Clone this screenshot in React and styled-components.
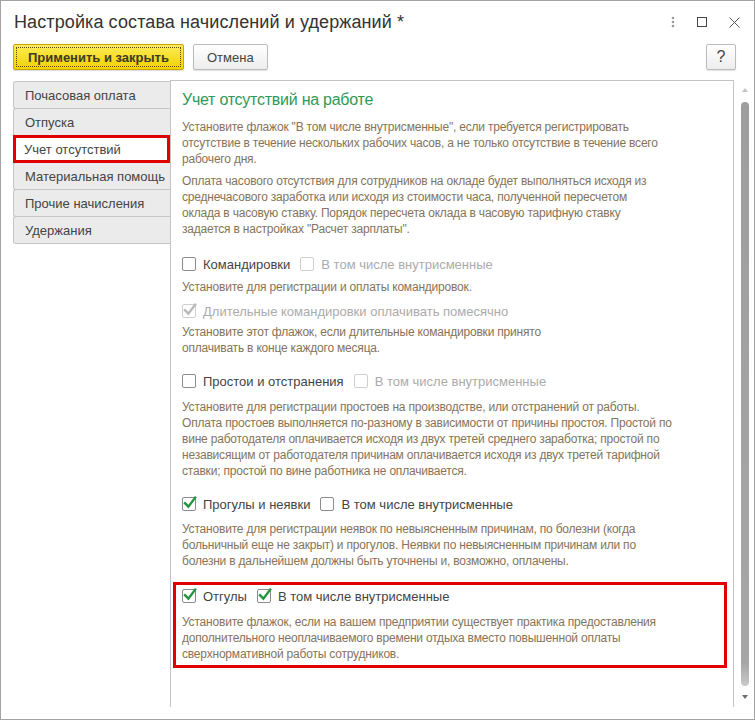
import React from 'react'
import styled, { createGlobalStyle } from 'styled-components'

const Global = createGlobalStyle`
  html, body { margin: 0; padding: 0; background: #fff; }
  body { font-family: "Liberation Sans", Arial, sans-serif; }
`

const tabs = [
  'Почасовая оплата',
  'Отпуска',
  'Учет отсутствий',
  'Материальная помощь',
  'Прочие начисления',
  'Удержания',
]

const Check = ({ checked, disabled }) => (
  <Box $disabled={disabled}>
    {checked && (
      <svg width="16" height="16" viewBox="0 0 16 16">
        <path
          d="M3 8.2 L6.4 11.6 L13.2 2.6"
          fill="none"
          stroke={disabled ? '#b9b9b9' : '#23963f'}
          strokeWidth="2.4"
          strokeLinecap="square"
        />
      </svg>
    )}
  </Box>
)

const Option = ({ label, checked, disabled }) => (
  <OptionWrap>
    <Check checked={checked} disabled={disabled} />
    <OptionText $disabled={disabled}>{label}</OptionText>
  </OptionWrap>
)

// пояснения выводятся построчно, как в форме
const Hint = ({ top, lines }) => (
  <HintText $top={top}>
    {lines.map(l => (
      <HintLine key={l}>{l}</HintLine>
    ))}
  </HintText>
)

const App = () => {
  return (
    <>
      <Global />
      <Window>
        <TitleBar>
          <Title>Настройка состава начислений и удержаний *</Title>
          <TitleIcons>
            <svg width="4" height="12" viewBox="0 0 4 12">
              <circle cx="2" cy="2" r="1.3" fill="#9a9a9a" />
              <circle cx="2" cy="6" r="1.3" fill="#9a9a9a" />
              <circle cx="2" cy="10" r="1.3" fill="#9a9a9a" />
            </svg>
            <svg width="10" height="10" viewBox="0 0 10 10">
              <rect x="0.5" y="0.5" width="9" height="9" fill="none" stroke="#444" />
            </svg>
            <svg width="11" height="11" viewBox="0 0 11 11">
              <path d="M0.5 0.5 L10.5 10.5 M10.5 0.5 L0.5 10.5" stroke="#555" strokeWidth="1" />
            </svg>
          </TitleIcons>
        </TitleBar>

        <Toolbar>
          <PrimaryButton>
            <span>Применить и закрыть</span>
          </PrimaryButton>
          <Button>Отмена</Button>
          <Spacer />
          <Button $narrow>?</Button>
        </Toolbar>

        <Body>
          <TabList>
            {tabs.map((t, i) => (
              <Tab key={t} $active={i === 2}>{t}</Tab>
            ))}
          </TabList>

          <Panel>
            <Heading>Учет отсутствий на работе</Heading>
            <Hint
              top={9}
              lines={[
                'Установите флажок "В том числе внутрисменные", если требуется регистрировать',
                'отсутствие в течение нескольких рабочих часов, а не только отсутствие в течение всего',
                'рабочего дня.',
              ]}
            />
            <Hint
              top={6}
              lines={[
                'Оплата часового отсутствия для сотрудников на окладе будет выполняться исходя из',
                'среднечасового заработка или исходя из стоимости часа, полученной пересчетом',
                'оклада в часовую ставку. Порядок пересчета оклада в часовую тарифную ставку',
                'задается в настройках "Расчет зарплаты".',
              ]}
            />

            <Row $top={16}>
              <Option label="Командировки" />
              <Option label="В том числе внутрисменные" disabled />
            </Row>
            <Hint top={4} lines={['Установите для регистрации и оплаты командировок.']} />
            <Row $top={5}>
              <Option label="Длительные командировки оплачивать помесячно" checked disabled />
            </Row>
            <Hint
              top={2}
              lines={[
                'Установите этот флажок, если длительные командировки принято',
                'оплачивать в конце каждого месяца.',
              ]}
            />

            <Row $top={14}>
              <Option label="Простои и отстранения" />
              <Option label="В том числе внутрисменные" disabled />
            </Row>
            <Hint
              top={7}
              lines={[
                'Установите для регистрации простоев на производстве, или отстранений от работы.',
                'Оплата простоев выполняется по-разному в зависимости от причины простоя. Простой по',
                'вине работодателя оплачивается исходя из двух третей среднего заработка; простой по',
                'независящим от работодателя причинам оплачивается исходя из двух третей тарифной',
                'ставки; простой по вине работника не оплачивается.',
              ]}
            />

            <Row $top={14}>
              <Option label="Прогулы и неявки" checked />
              <Option label="В том числе внутрисменные" />
            </Row>
            <Hint
              top={6}
              lines={[
                'Установите для регистрации неявок по невыясненным причинам, по болезни (когда',
                'больничный еще не закрыт) и прогулов. Неявки по невыясненным причинам или по',
                'болезни в дальнейшем должны быть уточнены и, возможно, оплачены.',
              ]}
            />

            <Highlight>
              <Row>
                <Option label="Отгулы" checked />
                <Option label="В том числе внутрисменные" checked />
              </Row>
              <Hint
                top={7}
                lines={[
                  'Установите флажок, если на вашем предприятии существует практика предоставления',
                  'дополнительного неоплачиваемого времени отдыха вместо повышенной оплаты',
                  'сверхнормативной работы сотрудников.',
                ]}
              />
            </Highlight>
          </Panel>

          <Scrollbar>
            <Arrow $dir="up" />
            <Thumb />
            <Arrow $dir="down" />
          </Scrollbar>
        </Body>
      </Window>
    </>
  )
}

export default App

const Window = styled.div`
  width: 755px;
  height: 720px;
  box-sizing: border-box;
  border: 1px solid #a3a3a3;
  display: flex;
  flex-direction: column;
  background: #fff;
  overflow: hidden;
`

const TitleBar = styled.div`
  height: 42px;
  display: flex;
  align-items: center;
  padding: 0 14px 0 13px;
`

const Title = styled.div`
  flex: 1;
  font-size: 18px;
  letter-spacing: 0.1px;
  color: #333;
  white-space: nowrap;
`

const TitleIcons = styled.div`
  display: flex;
  align-items: center;
  gap: 22px;
  svg { display: block; }
`

const Toolbar = styled.div`
  display: flex;
  align-items: center;
  gap: 9px;
  padding: 1px 18px 0 12px;
  height: 26px;
`

const Spacer = styled.div`
  flex: 1;
`

const Button = styled.div`
  box-sizing: border-box;
  height: 26px;
  padding: 0 ${p => (p.$narrow ? '0' : '13px')};
  width: ${p => (p.$narrow ? '30px' : 'auto')};
  display: flex;
  align-items: center;
  justify-content: center;
  border: 1px solid #bcbcbc;
  border-radius: 2px;
  background: linear-gradient(#ffffff, #ededed);
  box-shadow: 0 1px 1px rgba(0, 0, 0, 0.12);
  font-size: ${p => (p.$narrow ? '16px' : '13px')};
  color: #444;
`

const PrimaryButton = styled.div`
  box-sizing: border-box;
  height: 26px;
  padding: 2px;
  display: flex;
  border: 1px solid #c9a600;
  border-radius: 2px;
  background: linear-gradient(#fcec57, #f2d200);
  box-shadow: 0 1px 1px rgba(0, 0, 0, 0.15);

  span {
    flex: 1;
    display: flex;
    align-items: center;
    padding: 0 11px;
    border: 1px dotted #5a4a00;
    font-size: 13px;
    font-weight: bold;
    color: #3d3a26;
    white-space: nowrap;
  }
`

const Body = styled.div`
  flex: 1;
  display: flex;
  margin-top: 10px;
  padding-left: 12px;
  min-height: 0;
`

const TabList = styled.div`
  width: 157px;
  padding-top: 1px;
  display: flex;
  flex-direction: column;
`

const Tab = styled.div`
  position: relative;
  z-index: ${p => (p.$active ? 1 : 0)};
  box-sizing: border-box;
  flex: none;
  height: 28px;
  margin-top: -1px;
  &:first-child { margin-top: 0; }
  display: flex;
  align-items: center;
  padding-left: ${p => (p.$active ? '8px' : '11px')};
  font-size: 13px;
  color: #444;
  white-space: nowrap;
  overflow: hidden;
  background: ${p => (p.$active ? '#fff' : '#ebebeb')};
  border: ${p => (p.$active ? '3px solid #e00000' : '1px solid #c6c6c6')};
  border-right: ${p => (p.$active ? '3px solid #e00000' : 'none')};
  border-radius: ${p => (p.$active ? '0' : '3px 0 0 3px')};
`

const Panel = styled.div`
  width: 564px;
  box-sizing: border-box;
  border: 1px solid #c3c3c3;
  border-bottom: none;
  padding: 9px 12px 0 11px;
  margin-bottom: 12px;
`

const Heading = styled.div`
  font-size: 16px;
  letter-spacing: -0.25px;
  line-height: 20px;
  color: #2f9a58;
`

const HintText = styled.div`
  margin-top: ${p => p.$top || 0}px;
  font-size: 12px;
  letter-spacing: -0.2px;
  line-height: 16px;
  color: #857459;
`

const HintLine = styled.div`
  white-space: nowrap;
`

const Row = styled.div`
  margin-top: ${p => p.$top || 0}px;
  height: 22px;
  display: flex;
  align-items: center;
  gap: 10px;
`

const OptionWrap = styled.div`
  display: flex;
  align-items: center;
  gap: 7px;
`

const Box = styled.div`
  position: relative;
  width: 14px;
  height: 14px;
  box-sizing: border-box;
  border: 1px solid ${p => (p.$disabled ? '#cfcfcf' : '#8c8c8c')};
  border-radius: 2px;
  background: #fff;

  svg {
    position: absolute;
    left: -1px;
    top: -3px;
  }
`

const OptionText = styled.span`
  font-size: 13px;
  color: ${p => (p.$disabled ? '#ababab' : '#444')};
  white-space: nowrap;
`

const Highlight = styled.div`
  margin: 13px -6px 0 -9px;
  border: 3px solid #e00000;
  padding: 0 6px 3px 6px;
`

const Scrollbar = styled.div`
  width: 19px;
  display: flex;
  flex-direction: column;
  align-items: center;
  padding: 8px 0 20px 1px;
`

const Arrow = styled.div`
  width: 0;
  height: 0;
  border-left: 3px solid transparent;
  border-right: 3px solid transparent;
  ${p =>
    p.$dir === 'up'
      ? 'border-bottom: 4px solid #c4c4c4; margin-bottom: 10px;'
      : 'border-top: 4px solid #6e6e6e; margin-top: 9px;'}
`

const Thumb = styled.div`
  flex: 1;
  width: 8px;
  border-radius: 4px;
  background: linear-gradient(#9e9e9e 0, #a6a6a6 96%, #c9c9c9 100%);
`
